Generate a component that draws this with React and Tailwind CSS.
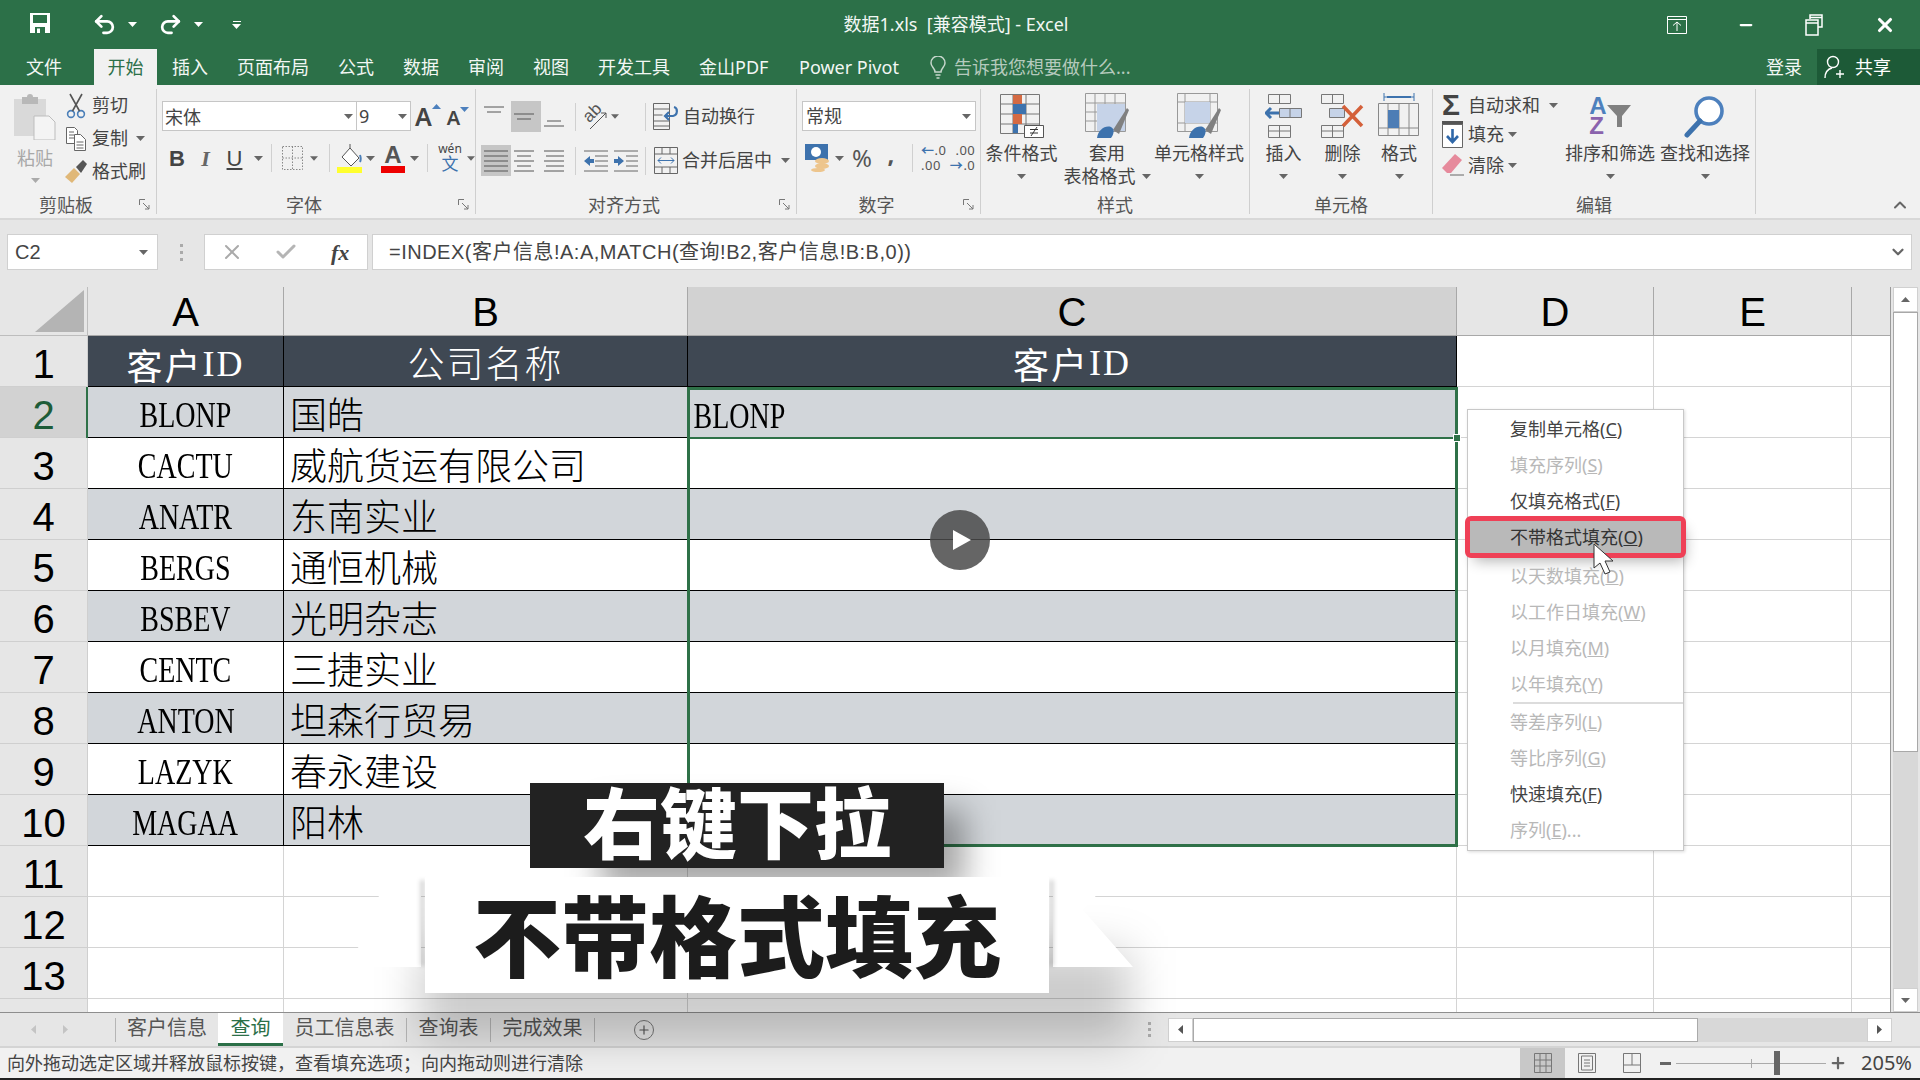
import React from 'react';
import { Undo2, Redo2, Check, X, Minus, Plus, ChevronUp, ChevronDown } from 'lucide-react';

const rows = [
    ['BLONP', '国皓', 'BLONP'],
    ['CACTU', '威航货运有限公司'],
    ['ANATR', '东南实业'],
    ['BERGS', '通恒机械'],
    ['BSBEV', '光明杂志'],
    ['CENTC', '三捷实业'],
    ['ANTON', '坦森行贸易'],
    ['LAZYK', '春永建设'],
    ['MAGAA', '阳林'],
];

const menuItems = [
    ['复制单元格(', 'C', ')', true],
    ['填充序列(', 'S', ')', false],
    ['仅填充格式(', 'F', ')', true],
    ['不带格式填充(', 'O', ')', true, 'hot'],
    ['以天数填充(', 'D', ')', false],
    ['以工作日填充(', 'W', ')', false],
    ['以月填充(', 'M', ')', false],
    ['以年填充(', 'Y', ')', false],
    'sep',
    ['等差序列(', 'L', ')', false],
    ['等比序列(', 'G', ')', false],
    ['快速填充(', 'F', ')', true],
    ['序列(', 'E', ')...', false],
];

const Caret = ({ c = '', color = '#666' }) => (
    <svg width="9" height="5" viewBox="0 0 9 5" className={c}><path d="M0 0h9L4.5 5z" fill={color} /></svg>
);

const Slot = ({ c = '', children }) => <div className={`flex items-center justify-center shrink-0 ${c}`}>{children}</div>;

const Sep = ({ c = '' }) => <div className={`w-px h-[28px] bg-[#d0d0d0] shrink-0 ${c}`} />;

const Launcher = () => (
    <svg width="11" height="11" viewBox="0 0 11 11" fill="none" stroke="#777"><path d="M.5 6V.5H6" /><path d="M4 4l6 6M10 6v4H6" /></svg>
);

const Group = ({ w, label, launcher, border = true, children }) => (
    <div className={`${w} h-[125px] mt-[4px] flex flex-col shrink-0 ${border ? 'border-r border-[#cfcfcf]' : ''}`}>
        <div className="h-[101px]">{children}</div>
        <div className="h-[24px] flex items-center">
            <div className="flex-1 text-center text-[18px] leading-[24px] pt-[5px] text-[#555]">{label}</div>
            {launcher && <div className="w-[24px] flex justify-center pt-[4px]"><Launcher /></div>}
        </div>
    </div>
);

const BigBtn = ({ w, icon, text, text2 }) => (
    <div className={`${w} flex flex-col items-center shrink-0`}>
        <div className="h-[43px] mt-[5px] flex items-center justify-center">{icon}</div>
        <div className="h-[24px] mt-[4px] text-[18px] leading-[24px] whitespace-nowrap text-[#444]">{text}</div>
        <div className="h-[22px] flex items-center gap-[6px] text-[18px] whitespace-nowrap text-[#444]">
            {text2}<Caret />
        </div>
    </div>
);

const Lines = ({ kind }) => {
    const sets = {
        top: ['M0 2h20', 'M3 7h14'],
        middle: ['M0 9h20', 'M3 14h14'],
        bottom: ['M3 16h14', 'M0 21h20'],
        left: ['M0 2h24', 'M0 7h24', 'M0 12h24', 'M0 17h24', 'M0 22h24'],
        center: ['M0 2h20', 'M3 7h14', 'M0 12h20', 'M3 17h14', 'M0 22h20'],
        right: ['M0 2h20', 'M2 7h18', 'M0 12h20', 'M2 17h18', 'M0 22h20'],
    };
    return <svg width="24" height="24" viewBox="0 0 24 24" stroke="#555" fill="none">{sets[kind].map((d) => <path key={d} d={d} />)}</svg>;
};

const SaveIcon = () => (
    <svg width="20" height="20" viewBox="0 0 20 20"><path d="M0 0h20v20H0z" fill="#fff" /><path d="M3 2h14v8H3z" fill="#2c7048" /><path d="M5 14h10v6H5z" fill="#2c7048" /><path d="M7 15.5h3V20H7z" fill="#fff" /></svg>
);

const PasteIcon = () => (
    <svg width="42" height="46" viewBox="0 0 42 46">
        <path d="M0 5h32v37H0z" fill="#d9d9d9" />
        <path d="M8 3h16v7H8z" fill="#b8b8b8" /><circle cx="16" cy="3" r="3" fill="#b8b8b8" />
        <path d="M20 22h15l6 6v18H20z" fill="#f4f4f4" stroke="#bdbdbd" />
    </svg>
);

const CutIcon = () => (
    <svg width="20" height="26" viewBox="0 0 20 26" fill="none" stroke="#4b7fb8" strokeWidth="1.6">
        <circle cx="5" cy="21" r="3.4" /><circle cx="15" cy="21" r="3.4" />
        <path d="M6.5 18L16 1M13.5 18L4 1" stroke="#555" />
    </svg>
);

const CopyIcon = () => (
    <svg width="20" height="26" viewBox="0 0 20 26" fill="#fff" stroke="#666">
        <path d="M.5 1.5h8l3 3v13H.5z" /><path d="M8.5 8.5h6l5 5v11h-11z" />
        <path d="M10.5 16h7M10.5 19h7M10.5 22h7M3 6h5M3 9h5M3 12h5" fill="none" />
    </svg>
);

const BrushIcon = () => (
    <svg width="24" height="24" viewBox="0 0 24 24"><path d="M1 17l9-9 6 6-8 9z" fill="#e0b878" /><path d="M12 7l7-7 4 4-6 9z" fill="#555" /></svg>
);

const BordersIcon = () => (
    <svg width="21" height="24" viewBox="0 0 21 24" fill="none" stroke="#888" strokeDasharray="1.5 1.5"><path d="M.5.5h20v23H.5zM.5 12h20M10.5.5v23" /></svg>
);

const FillIcon = () => (
    <svg width="25" height="30" viewBox="0 0 25 30">
        <path d="M13 5l9 10-8 8-9-9z" fill="#fff" stroke="#555" /><path d="M13 5V1" stroke="#555" /><path d="M23 12c1 3 1 5 0 7" stroke="#4b7fb8" strokeWidth="2" fill="none" />
        <path d="M0 24h25v6H0z" fill="#ffff2e" />
    </svg>
);

const FontColorIcon = () => (
    <div className="flex flex-col items-center leading-none">
        <span className="text-[24px] leading-[22px] font-bold text-[#555] [font-family:'Liberation_Sans',sans-serif]">A</span>
        <div className="w-[24px] h-[7px] bg-[#ee0000]" />
    </div>
);

const WrapIcon = () => (
    <svg width="28" height="27" viewBox="0 0 28 27" fill="none" stroke="#666"><path d="M.5.5h16v26H.5zM.5 6h16M.5 12h9M.5 18h16M.5 23h16" /><path d="M12 13h8c5-1 5-8 1-9" stroke="#3d72ad" strokeWidth="2.2" /><path d="M16 9l-4 4 4 4" stroke="#3d72ad" strokeWidth="2.2" /></svg>
);

const MergeIcon = () => (
    <svg width="24" height="27" viewBox="0 0 24 27" fill="none" stroke="#666"><path d="M.5.5h23v26H.5zM.5 7h23M.5 20h23M8 .5V7M16 .5V7M8 20v6.5M16 20v6.5" /><path d="M4 13.5h16M7 10.5l-3 3 3 3M17 10.5l3 3-3 3" stroke="#3d72ad" /></svg>
);

const MoneyIcon = () => (
    <svg width="25" height="28" viewBox="0 0 25 28"><path d="M0 0h23v16H0z" fill="#3d72ad" /><circle cx="11" cy="8" r="5" fill="#fff" /><ellipse cx="17" cy="17" rx="7" ry="3" fill="#edc58d" /><ellipse cx="17" cy="22" rx="7" ry="3" fill="#edc58d" /><ellipse cx="13" cy="26" rx="7" ry="2" fill="#edc58d" /></svg>
);

const CondIcon = () => (
    <svg width="44" height="44" viewBox="0 0 44 44" fill="none" stroke="#777">
        <path d="M.5.5h39v39H.5zM.5 10h39M.5 20h39M.5 30h39M13 .5v39M26 .5v39" />
        <path d="M13 1h9v9h-9zM13 20h9v10h-9z" fill="#d46a43" stroke="none" /><path d="M13 10h13v10H13zM13 30h5v9h-5z" fill="#3d72ad" stroke="none" />
        <path d="M24.5 31.5h19v12h-19z" fill="#fff" stroke="#555" /><path d="M30 35.5h8M30 39h8M37 33l-6 9" stroke="#333" />
    </svg>
);

const TableIcon = () => (
    <svg width="44" height="46" viewBox="0 0 44 46" fill="none" stroke="#999">
        <path d="M.5.5h40v38H.5zM.5 10h40M.5 19h40M.5 28h40M10 .5v38M20 .5v38M30 .5v38" />
        <path d="M12 11h28v27H12z" fill="#c6d3e8" stroke="none" />
        <path d="M28 37l14-22 2 2-10 24z" fill="#808080" stroke="none" /><path d="M12 45c1-8 8-13 14-11 4 2 3 7 0 11z" fill="#3d72ad" stroke="none" />
    </svg>
);

const CellStyleIcon = () => (
    <svg width="44" height="46" viewBox="0 0 44 46" fill="none" stroke="#999">
        <path d="M.5.5h40v38H.5zM.5 9h40M.5 30h40M8 .5v38M33 .5v38" /><path d="M8 9h25v21H8z" fill="#c6d3e8" stroke="none" />
        <path d="M28 37l14-22 2 2-10 24z" fill="#808080" stroke="none" /><path d="M12 45c1-8 8-13 14-11 4 2 3 7 0 11z" fill="#3d72ad" stroke="none" />
    </svg>
);

const InsertIcon = () => (
    <svg width="38" height="44" viewBox="0 0 38 44" fill="none" stroke="#777">
        <path d="M3.5.5h22v9h-22zM14.5.5v9M3.5 31.5h22v12h-22zM3.5 37h22M14.5 31.5v12" /><path d="M14.5 14.5h22v9h-22zM25 14.5v9" fill="#c6d3e8" />
        <path d="M1 19h13M6 14l-5 5 5 5" stroke="#3d72ad" strokeWidth="3" />
    </svg>
);

const DeleteIcon = () => (
    <svg width="44" height="44" viewBox="0 0 44 44" fill="none" stroke="#777">
        <path d="M.5.5h22v9H.5zM11.5.5v9M.5 31.5h22v12H.5zM.5 37h22M11.5 31.5v12" /><path d="M8.5 14.5h15v9h-15z" fill="#c6d3e8" />
        <path d="M22 12l19 20M41 12L22 32" stroke="#d4603a" strokeWidth="3.5" />
    </svg>
);

const FormatIcon = () => (
    <svg width="42" height="48" viewBox="0 0 42 48" fill="none" stroke="#888">
        <path d="M6 5h30M6 1v8M36 1v8" stroke="#3d72ad" /><path d="M9 5h24" stroke="#3d72ad" strokeWidth="2" />
        <path d="M.5 11.5h40v32H.5zM.5 36h40M10 11.5v32M21 11.5v32M31 11.5v32" /><path d="M10 18h11v18H10z" fill="#4d7db5" stroke="none" />
    </svg>
);

const FillDownIcon = () => (
    <svg width="21" height="27" viewBox="0 0 21 27"><path d="M0 0h21v5H0z" fill="#555" /><path d="M.5 3.5h20v23H.5z" fill="#fff" stroke="#666" /><path d="M10.5 8v13M5 15l5.500 6 5.500-6" stroke="#2f67a8" strokeWidth="2.600" fill="none" /></svg>
);

const EraserIcon = () => (
    <svg width="22" height="22" viewBox="0 0 22 22"><path d="M0 14L13 0l7 6-11 13H5z" fill="#e68a9c" /><path d="M8 21h14" stroke="#666" /></svg>
);

const SortIcon = () => (
    <div className="flex items-center">
        <div className="flex flex-col leading-none text-[24px] font-bold [font-family:'Liberation_Sans',sans-serif]">
            <span className="text-[#4d80bd] leading-[20px]">A</span><span className="text-[#8a63ad] leading-[20px]">Z</span>
        </div>
        <svg width="24" height="24" viewBox="0 0 24 24"><path d="M0 1h24l-9 11v11h-5V12z" fill="#808080" /></svg>
    </div>
);

const FindIcon = () => (
    <svg width="42" height="44" viewBox="0 0 42 44" fill="none"><circle cx="25" cy="17" r="13" stroke="#4d80bd" strokeWidth="3.600" fill="#fff" /><path d="M16 27L3 41" stroke="#3d72ad" strokeWidth="5" strokeLinecap="round" /></svg>
);

const OutdentIcon = () => (
    <svg width="24" height="24" viewBox="0 0 24 24" fill="none" stroke="#666"><path d="M0 2h24M11 7h13M11 12h13M11 17h13M0 22h24" /><path d="M0 12l6-5v3h4v4H6v3z" fill="#3d72ad" stroke="none" /></svg>
);

const IndentIcon = () => (
    <svg width="24" height="24" viewBox="0 0 24 24" fill="none" stroke="#666"><path d="M0 2h24M12 7h12M12 12h12M12 17h12M0 22h24" /><path d="M10 12L4 7v3H0v4h4v3z" fill="#3d72ad" stroke="none" /></svg>
);

const OrientIcon = () => (
    <div className="relative w-[26px] h-[28px]">
        <span className="absolute left-0 top-0 text-[17px] leading-[20px] text-[#555] -rotate-45 [font-family:'Liberation_Sans',sans-serif]">ab</span>
        <svg width="26" height="28" viewBox="0 0 26 28" fill="none" stroke="#555" className="absolute left-0 top-0"><path d="M7 26L23 10M18 10h5v5" /></svg>
    </div>
);

const Lat = ({ children }) => <span className="inline-block scale-x-[0.8] [font-family:'Liberation_Serif',serif]">{children}</span>;

const App = () => {
    const header = ['A', 'B', 'C', 'D', 'E', ''];

    return (
        <div className="relative w-[1920px] h-[1080px] overflow-hidden bg-[#f1f1f1] text-[#444] [font-family:'Noto_Sans','Noto_Sans_CJK_SC',sans-serif]">
            {/* title bar */}
            <div className="h-[49px] bg-[#2c7048] flex items-center text-white relative">
                <Slot c="w-[20px] ml-[30px] -mt-[3px]"><SaveIcon /></Slot>
                <Slot c="w-[28px] ml-[40px]"><Undo2 size={25} strokeWidth={2.6} /></Slot>
                <Caret c="ml-[10px]" color="#fff" />
                <Slot c="w-[28px] ml-[19px]"><Redo2 size={25} strokeWidth={2.6} /></Slot>
                <Caret c="ml-[10px]" color="#fff" />
                <div className="ml-[29px] flex flex-col items-center gap-[2px]"><div className="w-[8px] h-[1px] bg-white" /><Caret color="#fff" /></div>
                <div className="flex-1 text-center text-[18px] whitespace-pre text-[#f2f7f4] pl-[4px]">数据1.xls  [兼容模式] - Excel</div>
                <svg width="20" height="18" viewBox="0 0 20 18" fill="none" stroke="#fff" className="mr-[50px]"><path d="M.5.5h19v17H.5zM.5 3.500h19M10 15V6M6 9.500L10 6l4 3.500" /></svg>
                <Minus size={18} strokeWidth={3} className="mr-[50px]" />
                <svg width="18" height="22" viewBox="0 0 18 22" fill="none" stroke="#fff" strokeWidth="1.500" className="mr-[51px]"><path d="M5 5V1h12v12h-4M1 6h12v15H1zM1 9h12M5 3.500h12" /></svg>
                <X size={22} strokeWidth={3.4} className="mr-[24px]" />
            </div>

            {/* tabs */}
            <div className="h-[36px] bg-[#2c7048] flex text-[18px] leading-[36px] text-[#f2f7f4]">
                <div className="ml-[26px] w-[68px]">文件</div>
                <div className="w-[63px] bg-[#f1f1f1] text-[#2c7048] text-center">开始</div>
                <div className="ml-[15px] w-[65px]">插入</div>
                <div className="w-[101px]">页面布局</div>
                <div className="w-[65px]">公式</div>
                <div className="w-[65px]">数据</div>
                <div className="w-[65px]">审阅</div>
                <div className="w-[65px]">视图</div>
                <div className="w-[101px]">开发工具</div>
                <div className="w-[100px]">金山PDF</div>
                <div className="w-[131px] whitespace-nowrap">Power Pivot</div>
                <svg width="16" height="24" viewBox="0 0 16 24" fill="none" stroke="#c6d6cc" strokeWidth="1.500" className="mt-[7px]"><path d="M5 16c0-4-4-5-4-9a7 7 0 0114 0c0 4-4 5-4 9zM5.500 19h5M6.500 22h3" /></svg>
                <div className="ml-[8px] text-[#b5cabd] flex-1">告诉我您想要做什么...</div>
                <div className="w-[51px]">登录</div>
                <div className="w-[103px] bg-[#1d5a37] flex items-center">
                    <svg width="20" height="24" viewBox="0 0 20 24" fill="none" stroke="#fff" strokeWidth="1.400" className="ml-[7px]"><circle cx="9" cy="7" r="5.500" /><path d="M1 23c0-6 3-9 7-10M12 19h8M16 15v8" /></svg>
                    <span className="ml-[11px] text-white">共享</span>
                </div>
            </div>

            {/* ribbon */}
            <div className="h-[133px] flex">
                <Group w="w-[157px]" label="剪贴板" launcher>
                    <div className="flex h-full">
                        <div className="w-[62px] flex flex-col items-center pl-[8px] shrink-0">
                            <div className="mt-[5px] h-[46px]"><PasteIcon /></div>
                            <div className="mt-[6px] text-[18px] leading-[24px] text-[#a8a8a8]">粘贴</div>
                            <Caret c="mt-[8px]" color="#aaa" />
                        </div>
                        <div className="text-[18px]">
                            <div className="h-[33px] flex items-center"><Slot c="w-[28px] mr-[2px]"><CutIcon /></Slot>剪切</div>
                            <div className="h-[33px] flex items-center"><Slot c="w-[28px] mr-[2px]"><CopyIcon /></Slot>复制<Caret c="ml-[8px]" /></div>
                            <div className="h-[33px] flex items-center"><Slot c="w-[28px] mr-[2px]"><BrushIcon /></Slot>格式刷</div>
                        </div>
                    </div>
                </Group>

                <Group w="w-[319px]" label="字体" launcher>
                    <div className="flex items-center mt-[12px] ml-[5px] h-[30px]">
                        <div className="w-[195px] h-full bg-white border border-[#c6c6c6] flex items-center justify-between px-[2px] text-[18px] [font-family:'Noto_Sans_CJK_SC',sans-serif]">宋体<Caret c="mr-[1px]" /></div>
                        <div className="w-[54px] h-full bg-white border border-l-0 border-[#c6c6c6] flex items-center justify-between px-[2px] text-[18px]">9<Caret c="mr-[1px]" /></div>
                        <Slot c="w-[32px] ml-[1px] items-start"><span className="text-[25px] font-semibold leading-none">A</span><Caret c="rotate-180 mb-[14px]" color="#4d80bd" /></Slot>
                        <Slot c="w-[28px]"><span className="text-[20px] font-semibold leading-none mt-[3px]">A</span><Caret c="mb-[14px]" color="#4d80bd" /></Slot>
                    </div>
                    <div className="flex items-center mt-[12px] ml-[5px] h-[30px]">
                        <Slot c="w-[30px] text-[22px] font-bold [font-family:'Liberation_Sans',sans-serif]">B</Slot>
                        <Slot c="w-[27px] text-[22px] italic font-bold text-[#666] [font-family:'Liberation_Serif',serif]">I</Slot>
                        <Slot c="w-[31px] text-[22px] underline [font-family:'Liberation_Sans',sans-serif]">U</Slot>
                        <Slot c="w-[17px]"><Caret /></Slot>
                        <Sep c="ml-[4px]" />
                        <Slot c="w-[36px] ml-[2px]"><BordersIcon /></Slot>
                        <Slot c="w-[8px]"><Caret /></Slot>
                        <Sep c="ml-[11px]" />
                        <Slot c="w-[25px] ml-[7px]"><FillIcon /></Slot>
                        <Slot c="w-[17px]"><Caret /></Slot>
                        <Slot c="w-[28px]"><FontColorIcon /></Slot>
                        <Slot c="w-[14px]"><Caret /></Slot>
                        <Sep c="ml-[6px]" />
                        <div className="w-[36px] ml-[5px] flex flex-col items-center leading-none">
                            <span className="text-[12px] leading-[12px]">wén</span>
                            <span className="text-[17px] leading-[18px] text-[#3d72ad]">文</span>
                        </div>
                        <Slot c="w-[8px]"><Caret /></Slot>
                    </div>
                </Group>

                <Group w="w-[321px]" label="对齐方式" launcher>
                    <div className="flex items-center mt-[12px] ml-[5px] h-[31px]">
                        <Slot c="w-[30px] h-full"><Lines kind="top" /></Slot>
                        <Slot c="w-[30px] h-full bg-[#c6c6c6]"><Lines kind="middle" /></Slot>
                        <Slot c="w-[30px] h-full"><Lines kind="bottom" /></Slot>
                        <Sep c="ml-[4px]" />
                        <Slot c="w-[30px] ml-[5px]"><OrientIcon /></Slot>
                        <Slot c="w-[8px]"><Caret /></Slot>
                        <Sep c="ml-[26px]" />
                        <Slot c="w-[28px] ml-[7px]"><WrapIcon /></Slot>
                        <span className="ml-[2px] text-[18px]">自动换行</span>
                    </div>
                    <div className="flex items-center mt-[13px] ml-[5px] h-[31px]">
                        <Slot c="w-[30px] h-full bg-[#c6c6c6]"><Lines kind="left" /></Slot>
                        <Slot c="w-[30px] h-full"><Lines kind="center" /></Slot>
                        <Slot c="w-[30px] h-full"><Lines kind="right" /></Slot>
                        <Sep c="ml-[4px]" />
                        <Slot c="w-[24px] ml-[8px]"><OutdentIcon /></Slot>
                        <Slot c="w-[24px] ml-[6px]"><IndentIcon /></Slot>
                        <Sep c="ml-[7px]" />
                        <Slot c="w-[24px] ml-[8px]"><MergeIcon /></Slot>
                        <span className="ml-[4px] text-[18px] whitespace-nowrap">合并后居中</span>
                        <Caret c="ml-[9px]" />
                    </div>
                </Group>

                <Group w="w-[184px]" label="数字" launcher>
                    <div className="mt-[12px] ml-[5px] w-[174px] h-[30px] bg-white border border-[#c6c6c6] flex items-center justify-between px-[3px] text-[18px]">常规<Caret c="mr-[1px]" /></div>
                    <div className="flex items-center mt-[12px] ml-[8px] h-[30px]">
                        <Slot c="w-[25px]"><MoneyIcon /></Slot>
                        <Slot c="w-[18px]"><Caret /></Slot>
                        <Slot c="w-[28px] text-[24px] text-[#555]">%</Slot>
                        <Slot c="w-[20px] ml-[5px] -mt-[8px] text-[24px] font-bold text-[#555]">,</Slot>
                        <Sep c="ml-[11px]" />
                        <div className="ml-[8px] text-[13px] leading-[15px] text-[#555] tracking-[0.5px]">
                            <div className="flex gap-[9px]"><span><span className="text-[#3d72ad] font-bold">←</span>.0</span><span>.00</span></div>
                            <div className="flex gap-[9px]"><span>.00</span><span><span className="text-[#3d72ad] font-bold">→</span>.0</span></div>
                        </div>
                    </div>
                </Group>

                <Group w="w-[269px]" label="样式">
                    <div className="flex">
                        <BigBtn w="w-[81px]" icon={<CondIcon />} text="条件格式" />
                        <BigBtn w="w-[90px]" icon={<TableIcon />} text="套用" text2="表格格式" />
                        <BigBtn w="w-[94px]" icon={<CellStyleIcon />} text="单元格样式" />
                    </div>
                </Group>

                <Group w="w-[183px]" label="单元格">
                    <div className="flex">
                        <BigBtn w="w-[67px]" icon={<InsertIcon />} text="插入" />
                        <BigBtn w="w-[51px]" icon={<DeleteIcon />} text="删除" />
                        <BigBtn w="w-[62px]" icon={<FormatIcon />} text="格式" />
                    </div>
                </Group>

                <Group w="w-[323px]" label="编辑">
                    <div className="flex">
                        <div className="w-[122px] ml-[9px] shrink-0 text-[18px]">
                            <div className="h-[32px] flex items-center">
                                <span className="w-[26px] text-[30px] font-semibold leading-none [font-family:'Liberation_Sans',sans-serif]">Σ</span>自动求和<Caret c="ml-[9px]" />
                            </div>
                            <div className="h-[27px] flex items-center"><Slot c="w-[26px] justify-start"><FillDownIcon /></Slot>填充<Caret c="ml-[4px]" /></div>
                            <div className="h-[34px] flex items-center"><Slot c="w-[26px] justify-start"><EraserIcon /></Slot>清除<Caret c="ml-[4px]" /></div>
                        </div>
                        <BigBtn w="w-[92px]" icon={<SortIcon />} text="排序和筛选" />
                        <BigBtn w="w-[94px] ml-[2px]" icon={<FindIcon />} text="查找和选择" />
                    </div>
                </Group>

                <div className="flex-1 flex items-end justify-end pb-[3px] pr-[10px]"><ChevronUp size={20} strokeWidth={2.4} className="text-[#666]" /></div>
            </div>

            {/* formula bar */}
            <div className="h-[69px] bg-[#e6e6e6] border-t-2 border-[#d8d8d8] flex items-start pt-[14px] pl-[7px] text-[20px]">
                <div className="w-[151px] h-[36px] bg-white border border-[#d0d0d0] flex items-center justify-between pl-[7px] pr-[9px] [font-family:'Liberation_Sans',sans-serif]">C2<Caret /></div>
                <div className="w-[46px] h-[36px] flex flex-col items-center justify-center gap-[4px]">
                    <div className="w-[3px] h-[3px] bg-[#aaa]" /><div className="w-[3px] h-[3px] bg-[#aaa]" /><div className="w-[3px] h-[3px] bg-[#aaa]" />
                </div>
                <div className="w-[164px] h-[36px] bg-white border border-[#d0d0d0] flex items-center">
                    <Slot c="w-[54px]"><X size={24} className="text-[#aaa]" /></Slot>
                    <Slot c="w-[54px]"><Check size={24} strokeWidth={3} className="text-[#b5b5b5]" /></Slot>
                    <span className="ml-[18px] italic font-bold text-[22px] [font-family:'Liberation_Serif',serif]">fx</span>
                </div>
                <div className="w-[1540px] ml-[4px] h-[36px] bg-white border border-[#d0d0d0] flex items-center justify-between pl-[16px] pr-[4px] whitespace-nowrap tracking-[0.5px] [font-family:'Liberation_Sans','Noto_Sans_CJK_SC',sans-serif]">
                    =INDEX(客户信息!A:A,MATCH(查询!B2,客户信息!B:B,0))
                    <ChevronDown size={18} strokeWidth={3} className="text-[#666]" />
                </div>
            </div>

            {/* sheet */}
            <div className="h-[726px] flex bg-[#e6e6e6] border-b border-[#8e8e8e]">
                <div className="w-[1890px] h-full overflow-hidden bg-white grid grid-cols-[88px_196px_404px_769px_197px_198px_38px] grid-rows-[49px] auto-rows-[51px] content-start">
                    <div className="bg-[#e6e6e6] border-r border-b border-[#bdbdbd] flex items-end justify-end pr-[3px] pb-[3px]">
                        <svg width="49" height="42" viewBox="0 0 49 42"><path d="M49 0v42H0z" fill="#b4b4b4" /></svg>
                    </div>
                    {header.map((h) => (
                        <div key={h || 'f'} className={`border-b border-[#a8a8a8] flex items-center justify-center pt-[2px] text-[40px] text-black [font-family:'Liberation_Sans',sans-serif] ${h ? 'border-r' : ''} ${h === 'C' ? 'bg-[#d2d2d2]' : 'bg-[#e6e6e6]'}`}>{h}</div>
                    ))}

                    {Array.from({ length: 14 }).map((_, i) => {
                        const n = i + 1;
                        const data = i >= 1 && i <= 9 ? rows[i - 1] : null;
                        const band = n % 2 === 0 && n <= 10;
                        const inTable = n <= 10;
                        const base = inTable ? 'border-r border-b border-black' : 'border-r border-b border-[#d4d4d4]';
                        const fill = n === 1 ? 'bg-[#3f4853] text-white' : band ? 'bg-[#d2d6da] text-black' : 'bg-white text-black';
                        return (
                            <React.Fragment key={n}>
                                <div className={`border-r border-b border-[#cfcfcf] flex items-center justify-center pt-[5px] text-[40px] [font-family:'Liberation_Sans',sans-serif] ${n === 2 ? 'bg-[#d2d2d2] text-[#1e5c38]' : 'bg-[#e6e6e6] text-black'}`}>{n}</div>
                                <div className={`${base} ${fill} flex items-center justify-center text-[35px] pt-[9px] whitespace-nowrap [font-family:'Noto_Sans_CJK_SC',serif]`}>
                                    {n === 1 && <span className="flex items-center tracking-[2px] text-[36px] -mt-[3px]">客户<span className="[font-family:'Liberation_Serif',serif]">ID</span></span>}
                                    {data && <Lat>{data[0]}</Lat>}
                                </div>
                                <div className={`${base} ${fill} flex items-center text-[37px] whitespace-nowrap font-light pt-[4px] [font-family:'Noto_Sans_CJK_SC',serif] ${n === 1 ? 'justify-center tracking-[2px]' : 'pl-[6px]'}`}>
                                    {n === 1 ? '公司名称' : data ? data[1] : ''}
                                </div>
                                <div className={`${base} ${fill} flex items-center text-[35px] pt-[7px] whitespace-nowrap [font-family:'Noto_Sans_CJK_SC',serif] ${n === 1 ? 'justify-center' : ''}`}>
                                    {n === 1 && <span className="flex items-center tracking-[2px] text-[36px] -mt-[3px]">客户<span className="[font-family:'Liberation_Serif',serif]">ID</span></span>}
                                    {data && data[2] && <span className="-ml-[6px]"><Lat>{data[2]}</Lat></span>}
                                </div>
                                <div className="border-r border-b border-[#d4d4d4]" />
                                <div className="border-r border-b border-[#d4d4d4]" />
                                <div className="border-b border-[#d4d4d4]" />
                            </React.Fragment>
                        );
                    })}
                </div>
                <div className="w-[30px] h-full flex flex-col items-start pl-[2px] border-l border-[#9a9a9a]">
                    <div className="w-[25px] h-[25px] bg-white border border-[#d0d0d0] flex items-center justify-center"><Caret c="rotate-180" /></div>
                    <div className="w-[25px] h-[440px] bg-white border border-[#a8a8a8]" />
                    <div className="w-[25px] flex-1 bg-[#d8d8d8]" />
                    <div className="w-[25px] h-[24px] bg-white border border-[#d0d0d0] flex items-center justify-center"><Caret /></div>
                </div>
            </div>

            {/* sheet tabs */}
            <div className="h-[33px] bg-[#e6e6e6] flex items-center text-[20px] text-[#555]">
                <Slot c="w-[24px] ml-[21px] text-[#c4c4c4]"><Caret c="rotate-90" color="#c4c4c4" /></Slot>
                <Slot c="w-[24px] ml-[8px]"><Caret c="-rotate-90" color="#c4c4c4" /></Slot>
                <div className="w-px h-[24px] bg-[#b5b5b5] ml-[38px]" />
                <div className="w-[102px] h-full text-center leading-[30px]">客户信息</div>
                <div className="w-[65px] h-full bg-white border-b-[3px] border-[#2c7048] text-[#2c7048] text-center leading-[30px]">查询</div>
                <div className="w-[123px] h-full text-center leading-[30px]">员工信息表</div>
                <div className="w-px h-[24px] bg-[#b5b5b5]" />
                <div className="w-[83px] h-full text-center leading-[30px]">查询表</div>
                <div className="w-px h-[24px] bg-[#b5b5b5]" />
                <div className="w-[103px] h-full text-center leading-[30px]">完成效果</div>
                <div className="w-px h-[24px] bg-[#b5b5b5]" />
                <div className="ml-[39px] w-[20px] h-[20px] rounded-full border border-[#777] flex items-center justify-center"><Plus size={14} /></div>
                <div className="ml-[494px] flex flex-col gap-[3px]">
                    <div className="w-[3px] h-[3px] bg-[#aaa]" /><div className="w-[3px] h-[3px] bg-[#aaa]" /><div className="w-[3px] h-[3px] bg-[#aaa]" />
                </div>
                <div className="ml-[17px] w-[25px] h-[24px] bg-white border border-[#d0d0d0] flex items-center justify-center"><Caret c="rotate-90" color="#555" /></div>
                <div className="w-[505px] h-[24px] bg-white border border-[#aaa]" />
                <div className="w-[169px] h-[24px] bg-[#d8d8d8]" />
                <div className="w-[25px] h-[24px] bg-white border border-[#d0d0d0] flex items-center justify-center"><Caret c="-rotate-90" color="#555" /></div>
            </div>

            {/* status bar */}
            <div className="h-[32px] bg-[#f1f1f1] border-t-2 border-[#d4d4d4] flex items-center pr-[8px] text-[18px] text-[#444]">
                <span className="ml-[7px] flex-1 whitespace-nowrap">向外拖动选定区域并释放鼠标按键，查看填充选项；向内拖动则进行清除</span>
                <Slot c="w-[45px] h-full bg-[#c8c8c8]">
                    <svg width="18" height="20" viewBox="0 0 18 20" fill="none" stroke="#777"><path d="M.5.500h17v19H.5zM.5 7h17M.5 13h17M6 .5v19M12 .5v19" /></svg>
                </Slot>
                <Slot c="w-[44px]">
                    <svg width="18" height="20" viewBox="0 0 18 20" fill="none" stroke="#777"><path d="M.5.500h17v19H.5zM3.500 3h11v14h-11zM6 7h6M6 10h6M6 13h6" /></svg>
                </Slot>
                <Slot c="w-[46px]">
                    <svg width="18" height="20" viewBox="0 0 18 20" fill="none" stroke="#777"><path d="M.5.500h17v19H.5zM9 .5V12M.5 12H18" /></svg>
                </Slot>
                <div className="w-[11px] h-[3px] bg-[#666] ml-[5px]" />
                <div className="w-[150px] ml-[5px] h-[1px] bg-[#aaa] flex items-center justify-start">
                    <div className="w-px h-[9px] bg-[#aaa] ml-[75px]" />
                    <div className="w-[6px] h-[24px] bg-[#666] ml-[22px]" />
                </div>
                <Plus size={18} strokeWidth={3} className="ml-[3px] text-[#666]" />
                <span className="ml-[14px] text-[20px] whitespace-nowrap">205%</span>
            </div>
            <div className="h-[2px] bg-[#222]" />

            {/* green selection over C2:C10 */}
            <div className="absolute left-[687px] top-[387px] w-[771px] h-[460px] border-[3px] border-[#2f7148] pointer-events-none" />
            <div className="absolute left-[687px] top-[387px] w-[771px] h-[52px] border-b-[2px] border-[#2f7148] pointer-events-none" />
            <div className="absolute left-[1454px] top-[435px] w-[6px] h-[6px] bg-[#2f7148] outline outline-white" />
            <div className="absolute left-[86px] top-[387px] w-[2px] h-[51px] bg-[#2f7148]" />

            {/* play button */}
            <div className="absolute left-[930px] top-[510px] w-[60px] h-[60px] rounded-full bg-[#4a4a4a]/85 flex items-center justify-center">
                <svg width="20" height="22" viewBox="0 0 20 22" className="ml-[3px]"><path d="M1 1l18 10L1 21z" fill="#fff" /></svg>
            </div>

            {/* fill menu */}
            <div className="absolute left-[1467px] top-[409px] w-[217px] h-[442px] bg-white border border-[#c8c8c8] shadow-[1px_1px_3px_rgba(0,0,0,0.15)] pt-[1px] text-[18px] whitespace-nowrap">
                {menuItems.map((m, i) => {
                    if (m === 'sep') return <div key={i} className="ml-[45px] h-[2px] bg-[#dcdcdc]" />;
                    const [a, key, b, on, hot] = m;
                    if (hot) {
                        return (
                            <div key={i} className="mx-[2px] my-[2px] mb-[5px] h-[32px] pl-[40px] flex items-center bg-[#b9b9b9] text-[#333] rounded-[1px] outline-[5px] outline-solid outline-[#ef4056] shadow-[4px_8px_14px_rgba(0,0,0,0.3)]">
                                {a}<span className="underline">{key}</span>{b}
                            </div>
                        );
                    }
                    return (
                        <div key={i} className={`h-[36px] pl-[42px] flex items-center ${on ? 'text-[#444]' : 'text-[#b8b8b8]'}`}>
                            {a}<span className="underline">{key}</span>{b}
                        </div>
                    );
                })}
            </div>
            <svg width="22" height="34" viewBox="0 0 22 34" className="absolute left-[1593px] top-[543px]">
                <path d="M1 1v24l6-5 5 11 5-2-5-11h8z" fill="#fff" stroke="#333" />
            </svg>

            {/* caption */}
            <div className="absolute left-[420px] top-[950px] w-[710px] h-[90px] bg-black/20 blur-[22px]" />
            <div className="absolute left-[600px] top-[810px] w-[365px] h-[80px] bg-black/35 blur-[16px]" />
            <svg width="794" height="92" viewBox="0 0 794 92" className="absolute left-[340px] top-[876px]">
                <path d="M81 1H21l30 33-50 57h80zM713 1h60l-30 33 50 57h-80z" fill="#fff" />
            </svg>
            <div className="absolute left-[420px] top-[880px] w-[5px] h-[86px] bg-black/15 blur-[2px]" />
            <div className="absolute left-[1049px] top-[880px] w-[5px] h-[86px] bg-black/15 blur-[2px]" />
            <div className="absolute left-[530px] top-[783px] w-[414px] h-[85px] bg-[#222] flex items-center justify-center pb-[12px] text-white text-[77px] font-black leading-none whitespace-nowrap [font-family:'Noto_Sans_CJK_SC',sans-serif]">右键下拉</div>
            <div className="absolute left-[425px] top-[877px] w-[624px] h-[116px] bg-white flex items-center justify-center pb-[6px] text-[#1c1c1c] text-[88px] font-black leading-none whitespace-nowrap [font-family:'Noto_Sans_CJK_SC',sans-serif]">不带格式填充</div>
        </div>
    );
};

export default App;
